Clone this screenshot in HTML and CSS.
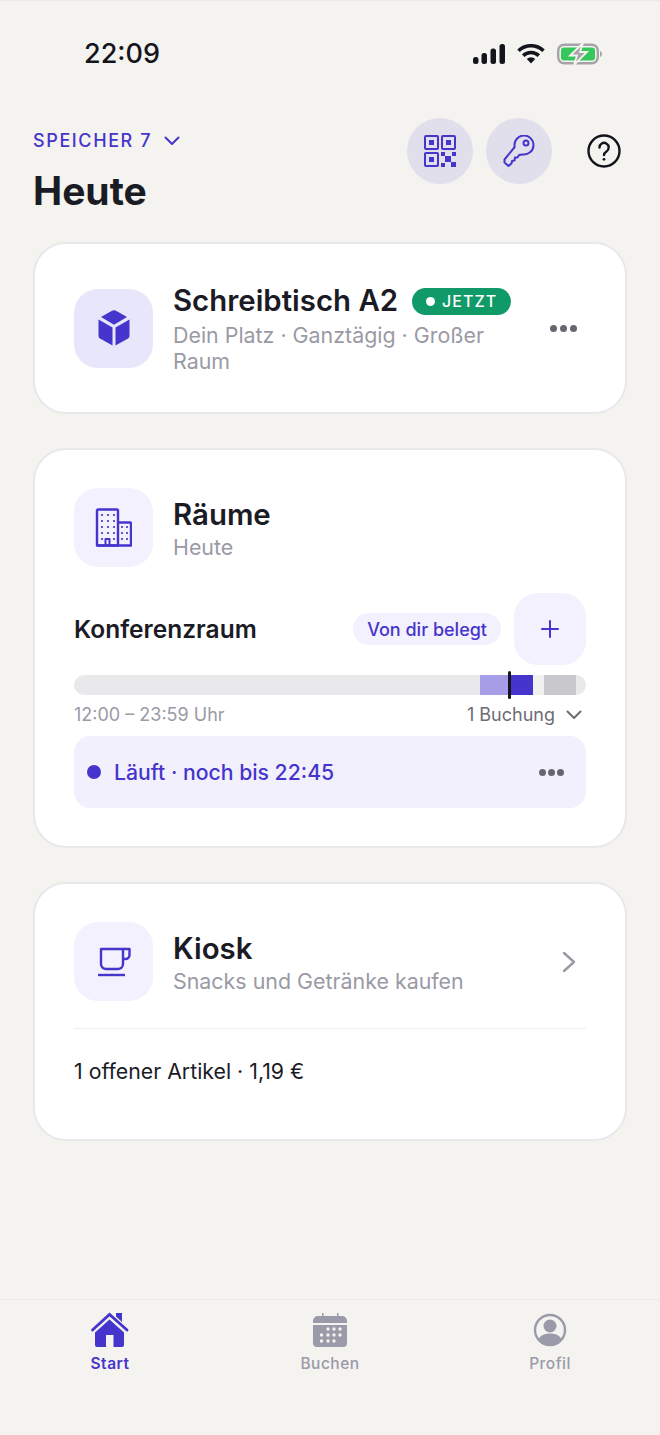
FILE: index.html
```html
<!DOCTYPE html>
<html lang="de">
<head>
    <meta charset="UTF-8">
    <meta name="viewport" content="width=device-width, initial-scale=1.0">
    <title>Heute</title>
    <link rel="stylesheet" href="styles.css">
</head>
<body>
<div class="phone">
    <div class="status-bar">
        <span class="clock">22:09</span>
        <div class="status-icons">
            <svg width="32" height="20" viewBox="0 0 32 20"><rect x="0" y="13" width="5.500" height="7" rx="2.500"/><rect x="8.500" y="9" width="5.500" height="11" rx="2.500"/><rect x="17.500" y="4.500" width="5.500" height="15.500" rx="2.500"/><rect x="26.500" y="0" width="5.500" height="20" rx="2.500"/></svg>
            <svg width="28" height="20" viewBox="0 0 28 20" fill="none" stroke="#14141c" stroke-width="3.600"><path d="M1.500 6.800a18 18 0 0 1 25 0"/><path d="M6.200 11.600a11.400 11.400 0 0 1 15.600 0"/><path d="M14 19.500 9.800 15a6 6 0 0 1 8.400 0z" fill="#14141c" stroke="none"/></svg>
            <svg width="45" height="22" viewBox="0 0 45 22"><rect x="1.200" y="1.700" width="39.600" height="18.600" rx="6" fill="none" stroke="#a3a3a8" stroke-width="2.400"/><rect x="4" y="4.500" width="34" height="13" rx="3" fill="#34c759"/><path d="M43 8v6c1.300-.5 2-1.600 2-3s-.7-2.500-2-3z" fill="#a3a3a8"/><path d="M26 0 13 12.500h7L17 22l13-13h-7z" fill="#a3a3a8" stroke="#f4f3f0" stroke-width="1.800"/></svg>
        </div>
    </div>

    <header class="page-head">
        <div class="head-left">
            <div class="location">SPEICHER 7
                <svg width="16" height="10" viewBox="0 0 16 10" fill="none" stroke="#4535cc" stroke-width="2" stroke-linecap="round" stroke-linejoin="round"><path d="M1.500 1.500 8 8l6.500-6.500"/></svg>
            </div>
            <h1>Heute</h1>
        </div>
        <div class="head-actions">
            <div class="round-btn">
                <svg width="32" height="32" viewBox="0 0 32 32" fill="none" stroke="#4535cc" stroke-width="2"><rect x="1" y="1" width="13" height="13" rx="1"/><rect x="18" y="1" width="13" height="13" rx="1"/><rect x="1" y="18" width="13" height="13" rx="1"/><g fill="#4535cc" stroke="none"><rect x="5" y="5" width="5" height="5"/><rect x="22" y="5" width="5" height="5"/><rect x="5" y="22" width="5" height="5"/><rect x="17" y="17" width="4" height="4"/><rect x="28" y="17" width="4" height="4"/><rect x="21" y="21" width="6" height="6"/><rect x="17" y="28" width="4" height="4"/><rect x="27" y="27" width="5" height="5"/></g></svg>
            </div>
            <div class="round-btn">
                <svg width="33" height="33" viewBox="0 0 33 33" fill="none" stroke="#4535cc" stroke-width="2" stroke-linejoin="round"><path d="M11.700 12A9.500 9.500 0 1 1 19.500 19.400L16 20l-1.500 2.500H12l-.5 3-2.500.5-.5 2.500-3 2.500-4-3.500v-3z"/><circle cx="23" cy="8" r="2.500"/></svg>
            </div>
            <svg class="help" width="34" height="34" viewBox="0 0 34 34" fill="none" stroke="#14141c" stroke-width="2.400" stroke-linecap="round"><circle cx="17" cy="17" r="15.500"/><path d="M12.500 13.500a4.600 4.600 0 1 1 7 3.900c-1.600 1-2.500 1.800-2.500 3.600"/><circle cx="17" cy="25.300" r="1.400" fill="#14141c" stroke="none"/></svg>
        </div>
    </header>

    <main class="cards">
        <section class="card">
            <div class="card-head">
                <div class="tile tile-strong">
                    <svg width="34" height="36" viewBox="0 0 34 36" fill="#4535cc"><path d="M14.500 1a4.500 4.500 0 0 1 5 0l10.500 6-13 7.700L4 7z"/><path d="M1.500 9.500 15.500 17.500V35.500L3 28.500a3 3 0 0 1-1.500-2.500z"/><path d="M32.500 9.500 18.500 17.500V35.500L31 28.500a3 3 0 0 0 1.500-2.500z"/></svg>
                </div>
                <div class="head-text">
                    <div class="title-row">
                        <span class="title">Schreibtisch A2</span>
                        <span class="badge"><i class="badge-dot"></i>JETZT</span>
                    </div>
                    <p class="sub">Dein Platz · Ganztägig · Großer Raum</p>
                </div>
                <div class="dots"><i></i><i></i><i></i></div>
            </div>
        </section>

        <section class="card">
            <div class="card-head">
                <div class="tile">
                    <svg width="37" height="39" viewBox="0 0 37 39" fill="none" stroke="#4535cc" stroke-width="2.400" stroke-linejoin="round"><path d="M2 37.500V2.500a1 1 0 0 1 1-1h19a1 1 0 0 1 1 1v35z"/><path d="M23 14.500h12a1 1 0 0 1 1 1v22H23"/><path d="M2 37.500h21"/><path d="M10.500 37v-6h4v6" stroke-width="2"/><path d="M7 7h.01M13 7h.01M19 7h.01M7 13h.01M13 13h.01M19 13h.01M7 19h.01M13 19h.01M19 19h.01M7 25h.01M13 25h.01M19 25h.01M7 31h.01M19 31h.01M27 19h.01M32 19h.01M27 25h.01M32 25h.01M27 31h.01M32 31h.01" stroke-width="2.200" stroke-linecap="round"/></svg>
                </div>
                <div class="head-text">
                    <span class="title">Räume</span>
                    <p class="sub">Heute</p>
                </div>
            </div>

            <div class="room-row">
                <span class="room-name">Konferenzraum</span>
                <span class="pill">Von dir belegt</span>
                <div class="add-btn">
                    <svg width="18" height="18" viewBox="0 0 18 18" fill="none" stroke="#4535cc" stroke-width="2" stroke-linecap="round"><path d="M9 1v16M1 9h16"/></svg>
                </div>
            </div>

            <div class="timeline">
                <div class="seg seg-past"></div>
                <div class="seg seg-now"></div>
                <div class="seg seg-gap"></div>
                <div class="seg seg-other"></div>
                <div class="now-mark"></div>
            </div>
            <div class="time-row">
                <span>12:00 – 23:59 Uhr</span>
                <span class="bookings">1 Buchung
                    <svg width="16" height="10" viewBox="0 0 16 10" fill="none" stroke="#6c6c75" stroke-width="2" stroke-linecap="round" stroke-linejoin="round"><path d="M1.500 1.500 8 8l6.500-6.500"/></svg>
                </span>
            </div>

            <div class="booking">
                <i class="booking-dot"></i>
                <span class="booking-text">Läuft · noch bis 22:45</span>
                <div class="dots"><i></i><i></i><i></i></div>
            </div>
        </section>

        <section class="card card-kiosk">
            <div class="card-head">
                <div class="tile">
                    <svg width="34" height="30" viewBox="0 0 34 30" fill="none" stroke="#4535cc" stroke-width="2.400" stroke-linejoin="round"><path d="M4 2h22v15a5 5 0 0 1-5 5H9a5 5 0 0 1-5-5z"/><path d="M26 2h6.500v6a4 4 0 0 1-4 4H26"/><path d="M1 28h27"/></svg>
                </div>
                <div class="head-text">
                    <span class="title">Kiosk</span>
                    <p class="sub">Snacks und Getränke kaufen</p>
                </div>
                <svg class="chevron" width="14" height="22" viewBox="0 0 14 22" fill="none" stroke="#9a9aa5" stroke-width="2.400" stroke-linecap="round" stroke-linejoin="round"><path d="M2 2l10 9-10 9"/></svg>
            </div>
            <div class="divider"></div>
            <p class="kiosk-note">1 offener Artikel · 1,19 €</p>
        </section>
    </main>

    <nav class="tabbar">
        <div class="tab tab-active">
            <svg width="40" height="36" viewBox="0 0 40 36" fill="#4535cc"><path d="M26 1h6v9l-6-5.500z"/><path d="M2.500 18 19.500 2.500 37 18" fill="none" stroke="#4535cc" stroke-width="2.800" stroke-linecap="round"/><path d="M19.500 7.500 34 20.500V33a2 2 0 0 1-2 2h-8.500V23h-7.500v12H7a2 2 0 0 1-2-2V20.500z"/></svg>
            <span>Start</span>
        </div>
        <div class="tab">
            <svg width="36" height="36" viewBox="0 0 36 36" fill="#9a9aa8"><path d="M10 1h1.500v3H25V1h1.500v3H30a5 5 0 0 1 5 5v2H1V9a5 5 0 0 1 5-5h4z"/><path d="M1 13h34v18a4 4 0 0 1-4 4H5a4 4 0 0 1-4-4z"/><g fill="#f4f3f0"><circle cx="16" cy="17" r="1.700"/><circle cx="22" cy="17" r="1.700"/><circle cx="28" cy="17" r="1.700"/><circle cx="9.500" cy="23" r="1.700"/><circle cx="16" cy="23" r="1.700"/><circle cx="22" cy="23" r="1.700"/><circle cx="28" cy="23" r="1.700"/><circle cx="9.500" cy="29" r="1.700"/><circle cx="16" cy="29" r="1.700"/><circle cx="22" cy="29" r="1.700"/></g></svg>
            <span>Buchen</span>
        </div>
        <div class="tab">
            <svg width="34" height="36" viewBox="0 0 34 34" fill="#9a9aa8"><circle cx="17" cy="13" r="6.500"/><path d="M5 27c2-4.500 6.500-6.500 12-6.500S27 22.500 29 27a15 15 0 0 1-24 0z"/><circle cx="17" cy="17" r="15" fill="none" stroke="#9a9aa8" stroke-width="2.400"/></svg>
            <span>Profil</span>
        </div>
    </nav>
</div>
</body>
</html>
```

FILE: styles.css
```css
* {
    box-sizing: border-box;
}
body {
    margin: 0;
    font-family: Inter, "Noto Sans", sans-serif;
    color: #1b1b25;
    background: #f4f3f0;
}
i {
    display: block;
}
.phone {
    height: 1435px;
    display: flex;
    flex-direction: column;
    overflow: hidden;
    border-top: 1px solid #e9e9ea;
}

/* status bar */
.status-bar {
    height: 107px;
    padding: 36px 58px 0 84px;
    display: flex;
    justify-content: space-between;
    align-items: flex-start;
}
.clock {
    font-size: 27px;
    font-weight: 500;
    line-height: 34px;
    color: #14141c;
}
.status-icons {
    display: flex;
    align-items: center;
    gap: 12px;
    height: 34px;
    fill: #14141c;
}

/* header */
.page-head {
    height: 134px;
    padding: 10px 39px 0 33px;
    display: flex;
    justify-content: space-between;
    align-items: flex-start;
}
.location {
    display: flex;
    align-items: center;
    gap: 12px;
    margin-top: 10px;
    font-size: 18px;
    font-weight: 500;
    letter-spacing: 1.600px;
    line-height: 26px;
    color: #4535cc;
}
h1 {
    margin: 15px 0 0;
    font-size: 39px;
    font-weight: 700;
    line-height: 44px;
}
.head-actions {
    display: flex;
    align-items: center;
    gap: 13px;
}
.round-btn {
    width: 66px;
    height: 66px;
    border-radius: 50%;
    background: #e0dfeb;
    display: flex;
    align-items: center;
    justify-content: center;
}
.help {
    margin-left: 22px;
}

/* cards */
.cards {
    flex: 1;
    padding: 0 33px;
    display: flex;
    flex-direction: column;
    gap: 34px;
}
.card {
    background: #fff;
    border: 2px solid #e8e8ea;
    border-radius: 33px;
    padding: 38px 39px;
}
.card-kiosk {
    padding-bottom: 56px;
}
.card-head {
    display: flex;
    align-items: center;
    gap: 20px;
}
.tile {
    flex: none;
    width: 79px;
    height: 79px;
    border-radius: 24px;
    background: #f3f1fd;
    display: flex;
    align-items: center;
    justify-content: center;
}
.tile-strong {
    background: #e8e6fa;
}
.head-text {
    flex: 1;
    min-width: 0;
}
.title-row {
    display: flex;
    align-items: center;
    gap: 14px;
    margin-bottom: 2px;
}
.title {
    display: block;
    flex: none;
    font-size: 29.400px;
    font-weight: 600;
    line-height: 38px;
    white-space: nowrap;
}
.sub {
    margin: 0;
    font-size: 21.400px;
    line-height: 26px;
    color: #9a9aa5;
}
.badge {
    flex: none;
    display: flex;
    align-items: center;
    gap: 7px;
    height: 27px;
    padding: 0 14px;
    border-radius: 14px;
    background: #0f9a68;
    color: #fff;
    font-size: 16px;
    font-weight: 500;
    letter-spacing: 1px;
}
.badge-dot {
    width: 9px;
    height: 9px;
    border-radius: 50%;
    background: #fff;
}
.dots {
    flex: none;
    display: flex;
    gap: 3px;
    margin: 0 9px 0 20px;
}
.dots i {
    width: 7px;
    height: 7px;
    border-radius: 50%;
    background: #66666f;
}
.chevron {
    flex: none;
    margin-right: 10px;
}

/* room */
.room-row {
    display: flex;
    align-items: center;
    margin-top: 26px;
}
.room-name {
    flex: 1;
    font-size: 24.500px;
    font-weight: 600;
}
.pill {
    height: 32px;
    padding: 0 14px;
    margin-right: 13px;
    border-radius: 16px;
    background: #f3f1fd;
    color: #4535cc;
    font-size: 18px;
    font-weight: 500;
    line-height: 33px;
}
.add-btn {
    width: 72px;
    height: 72px;
    border-radius: 24px;
    background: #f3f1fd;
    display: flex;
    align-items: center;
    justify-content: center;
}
.timeline {
    position: relative;
    height: 20px;
    margin-top: 10px;
    border-radius: 10px;
    background: #e9e9eb;
}
.seg {
    position: absolute;
    top: 0;
    bottom: 0;
}
.seg-past {
    left: 406px;
    width: 30px;
    background: #a59ee6;
}
.seg-now {
    left: 436px;
    width: 23px;
    background: #4535cc;
}
.seg-gap {
    left: 459px;
    width: 11px;
    background: #f1f1f2;
}
.seg-other {
    left: 470px;
    width: 32px;
    background: #c9c9cd;
}
.now-mark {
    position: absolute;
    left: 434px;
    top: -4px;
    width: 3px;
    height: 28px;
    border-radius: 2px;
    background: #14141c;
}
.time-row {
    display: flex;
    justify-content: space-between;
    margin-top: 9px;
    font-size: 18px;
    line-height: 22px;
    color: #9a9aa5;
}
.bookings {
    display: flex;
    align-items: center;
    gap: 11px;
    padding-right: 4px;
    color: #6c6c75;
}
.booking {
    display: flex;
    align-items: center;
    height: 72px;
    margin-top: 10px;
    padding: 0 0 0 13px;
    border-radius: 16px;
    background: #f2f0fc;
}
.booking-dot {
    width: 14px;
    height: 14px;
    border-radius: 50%;
    background: #4535cc;
}
.booking-text {
    flex: 1;
    margin-left: 13px;
    font-size: 21.200px;
    font-weight: 500;
    color: #4535cc;
}
.booking .dots {
    gap: 2px;
    margin-right: 22px;
}

/* kiosk */
.divider {
    height: 1px;
    margin-top: 27px;
    background: #efeff0;
}
.kiosk-note {
    margin: 30px 0 0;
    font-size: 21.300px;
    line-height: 24px;
}

/* tabs */
.tabbar {
    height: 136px;
    border-top: 1px solid #ebebeb;
    display: grid;
    grid-template-columns: repeat(3, 1fr);
    padding-top: 12px;
}
.tab {
    display: flex;
    flex-direction: column;
    align-items: center;
    gap: 6px;
    font-size: 15.500px;
    font-weight: 500;
    letter-spacing: .5px;
    color: #9a9aa8;
}
.tab-active {
    color: #4535cc;
    font-weight: 600;
}
```
